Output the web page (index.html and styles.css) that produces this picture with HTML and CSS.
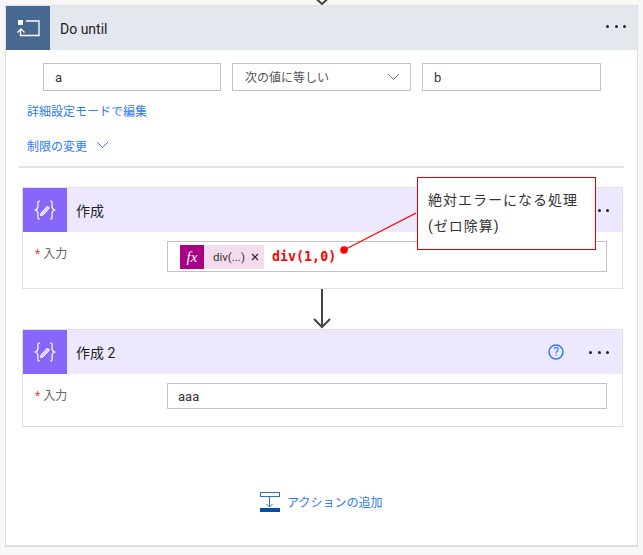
FILE: index.html
```html
<!DOCTYPE html>
<html lang="ja">
<head>
<meta charset="utf-8">
<title>Do until</title>
<link rel="stylesheet" href="styles.css">
</head>
<body>
<div class="top-arrow">
  <svg width="14" height="5" viewBox="0 0 14 5"><path d="M1.5 -1 L7 4 L12.5 -1" fill="none" stroke="#444" stroke-width="2"/></svg>
</div>
<main class="loop">
  <header class="loop-head">
    <div class="loop-icon">
      <svg width="44" height="44" viewBox="0 0 44 44">
        <rect x="12" y="14" width="5" height="5" fill="#fff"/>
        <path d="M20 15 H33 V29.5 H14.5 V24" fill="none" stroke="#fff" stroke-width="1.3"/>
        <path d="M11.5 26.5 L15 23 L18.5 26.5" fill="none" stroke="#fff" stroke-width="1.3"/>
      </svg>
    </div>
    <span class="loop-title">Do until</span>
    <span class="dots"><i></i><i></i><i></i></span>
  </header>
  <div class="loop-body">
    <div class="cond-row">
      <div class="box">a</div>
      <div class="box box-select">次の値に等しい
        <svg width="13" height="8" viewBox="0 0 13 8"><path d="M1 1 L6.5 6.5 L12 1" fill="none" stroke="#7a7a7a" stroke-width="1"/></svg>
      </div>
      <div class="box">b</div>
    </div>
    <a class="link link-edit">詳細設定モードで編集</a>
    <a class="link link-limit">制限の変更
      <svg width="13" height="8" viewBox="0 0 13 8"><path d="M1 1 L6.5 6.5 L12 1" fill="none" stroke="#2f7bf5" stroke-width="1"/></svg>
    </a>
    <hr class="rule">

    <section class="card">
      <header class="card-head">
        <div class="card-icon">
          <svg width="44" height="44" viewBox="0 0 44 44">
            <path d="M17 13 C14 13 15 15 15 18 C15 21 14 21.5 12.5 22 C14 22.5 15 23 15 26 C15 29 14 31 17 31" fill="none" stroke="#fff" stroke-width="1.2"/>
            <path d="M27 13 C30 13 29 15 29 18 C29 21 30 21.5 31.5 22 C30 22.5 29 23 29 26 C29 29 30 31 27 31" fill="none" stroke="#fff" stroke-width="1.2"/>
            <path d="M18 25 L24.5 18 L26.5 20 L20 27 L17.5 27.5 Z" fill="#d9cffd" stroke="#fff" stroke-width="1"/>
          </svg>
        </div>
        <span class="card-title">作成</span>
        <span class="dots dots-card"><i></i><i></i><i></i></span>
      </header>
      <div class="field">
        <span class="label"><b>*</b> 入力</span>
        <div class="input input-tall">
          <span class="fx">fx</span>
          <span class="token">div(...)<svg width="8" height="8" viewBox="0 0 8 8"><path d="M1 1 L7 7 M7 1 L1 7" stroke="#222" stroke-width="1.2"/></svg></span>
          <code class="expr">div(1,0)</code>
        </div>
      </div>
    </section>

    <div class="connector">
      <svg width="20" height="40" viewBox="0 0 20 40"><path d="M10 0 V38 M2 30 L10 38 L18 30" fill="none" stroke="#444" stroke-width="2"/></svg>
    </div>

    <section class="card card-second">
      <header class="card-head">
        <div class="card-icon">
          <svg width="44" height="44" viewBox="0 0 44 44">
            <path d="M17 13 C14 13 15 15 15 18 C15 21 14 21.5 12.5 22 C14 22.5 15 23 15 26 C15 29 14 31 17 31" fill="none" stroke="#fff" stroke-width="1.2"/>
            <path d="M27 13 C30 13 29 15 29 18 C29 21 30 21.5 31.5 22 C30 22.5 29 23 29 26 C29 29 30 31 27 31" fill="none" stroke="#fff" stroke-width="1.2"/>
            <path d="M18 25 L24.5 18 L26.5 20 L20 27 L17.5 27.5 Z" fill="#d9cffd" stroke="#fff" stroke-width="1"/>
          </svg>
        </div>
        <span class="card-title">作成 2</span>
        <svg class="help" width="16" height="16" viewBox="0 0 16 16">
          <circle cx="8" cy="8" r="7" fill="none" stroke="#2f7bf5" stroke-width="1.5"/>
          <text x="8" y="12" text-anchor="middle" class="help-mark">?</text>
        </svg>
        <span class="dots dots-card"><i></i><i></i><i></i></span>
      </header>
      <div class="field">
        <span class="label"><b>*</b> 入力</span>
        <div class="input input-short">aaa</div>
      </div>
    </section>

    <a class="add-action">
      <svg width="21" height="20" viewBox="0 0 21 20">
        <rect x="0.5" y="0.5" width="19" height="4" fill="none" stroke="#2f72c4" stroke-width="1"/>
        <path d="M9.5 5 V15 M6.5 12 L9.5 15 L12.5 12" fill="none" stroke="#2f72c4" stroke-width="1"/>
        <rect x="0" y="16" width="20" height="4" fill="#0a4ea3"/>
      </svg>
      <span class="add-label">アクションの追加</span>
    </a>
  </div>
</main>

<aside class="callout">絶対エラーになる処理<br>(ゼロ除算)</aside>
<svg class="pointer" width="80" height="50" viewBox="0 0 80 50">
  <line x1="8" y1="42" x2="80" y2="5" stroke="#f00" stroke-width="1.2"/>
  <circle cx="8" cy="42" r="3.8" fill="#f00"/>
</svg>
</body>
</html>
```
FILE: styles.css
```css
* { box-sizing: border-box; }
html, body { margin: 0; padding: 0; }
body {
  position: relative;
  width: 643px;
  height: 555px;
  overflow: hidden;
  background: #f8f8f8;
  font-family: Roboto, "Noto Sans CJK JP", sans-serif;
  font-size: 12px;
  color: #333;
}
.top-arrow { display: flex; justify-content: center; height: 5px; padding-left: 1px; }
.top-arrow svg { display: block; }
.loop {
  width: 633px;
  height: 542px;
  margin-left: 5px;
  background: #fff;
  border: 1px solid #e0e0e0;
  border-bottom-width: 2px;
}
.loop-head {
  display: flex;
  align-items: center;
  height: 44px;
  background: #e3e8ef;
}
.loop-icon {
  width: 44px;
  height: 44px;
  background: #47698f;
}
.loop-icon svg, .card-icon svg { display: block; }
.loop-title {
  margin-left: 10px;
  padding-top: 2px;
  font-size: 14px;
  color: #222;
}
.dots { display: flex; gap: 5.5px; margin-left: auto; margin-right: 11px; padding-bottom: 3px; }
.dots i { width: 3px; height: 3px; border-radius: 50%; background: #222; }
.dots-card { margin-left: 0; margin-right: 13px; padding-bottom: 0; }
.loop-body { padding-top: 13px; }
.cond-row {
  display: grid;
  grid-template-columns: 178px 179px 179px;
  column-gap: 11px;
  margin-left: 37px;
}
.box {
  display: flex;
  align-items: center;
  justify-content: space-between;
  height: 28px;
  padding: 0 11px;
  background: #fff;
  border: 1px solid #c4c4c4;
  font-size: 13px;
  color: #333;
}
.box-select { font-size: 12px; color: #555; padding: 0 10px 1px 12px; }
.link {
  display: flex;
  align-items: center;
  gap: 9px;
  margin-left: 21px;
  height: 16px;
  color: #2f7bf5;
  font-size: 12px;
}
.link-edit { margin-top: 11px; }
.link-limit { margin-top: 19px; }
.rule {
  width: 605px;
  height: 2px;
  margin: 13px 0 0 13px;
  border: 0;
  background: #e6e6e6;
}
.card {
  width: 601px;
  margin: 19px 0 0 16px;
  background: #fff;
  border: 1px solid #e0e0e0;
  padding-bottom: 16px;
}
.card-second { margin-top: 0; padding-bottom: 17px; }
.card-head {
  display: flex;
  align-items: center;
  height: 44px;
  background: #ede8fd;
}
.card-icon { width: 44px; height: 44px; background: #8766fb; }
.card-title { margin-left: 9px; font-size: 14px; color: #222; }
.help { margin-left: auto; margin-right: 25px; }
.help-mark { font-size: 12px; fill: #2f7bf5; font-family: Roboto, sans-serif; }
.card-head > .dots-card:nth-child(3) { margin-left: auto; }
.field {
  display: flex;
  padding: 9px 14px 0 12px;
}
.label { width: 132px; padding-top: 3px; color: #666; font-size: 12px; }
.label b { color: #e9414b; font-weight: 400; }
.input {
  display: flex;
  align-items: center;
  width: 440px;
  background: #fff;
  border: 1px solid #c4c4c4;
  color: #333;
}
.input-tall { height: 31px; padding-left: 12px; }
.input-short { height: 26px; padding-left: 10px; font-size: 13px; }
.fx {
  width: 24px;
  height: 24px;
  line-height: 24px;
  text-align: center;
  background: #aa0083;
  color: #fff;
  font-family: "Liberation Serif", serif;
  font-style: italic;
  font-size: 15px;
}
.token {
  display: flex;
  align-items: center;
  gap: 6px;
  width: 60px;
  height: 24px;
  padding-left: 9px;
  background: #f3dcee;
  font-size: 11.5px;
  color: #333;
}
.expr {
  margin-left: 8px;
  font-family: "DejaVu Sans Mono", monospace;
  font-size: 13.33px;
  font-weight: 700;
  color: #f00;
}
.connector { height: 40px; padding-left: 306px; }
.connector svg { display: block; }
.add-action {
  display: flex;
  align-items: center;
  gap: 6px;
  margin: 65px 0 0 254px;
  color: #2f7bf5;
  font-size: 12px;
}
.add-label { margin-bottom: 2px; }
.callout {
  position: absolute;
  left: 417px;
  top: 177px;
  width: 179px;
  height: 73px;
  padding: 9px 0 0 10px;
  background: #fff;
  border: 1px solid #e00000;
  font-size: 14px;
  line-height: 26px;
  letter-spacing: 1px;
  color: #333;
}
.pointer { position: absolute; left: 336px; top: 208px; }
```
